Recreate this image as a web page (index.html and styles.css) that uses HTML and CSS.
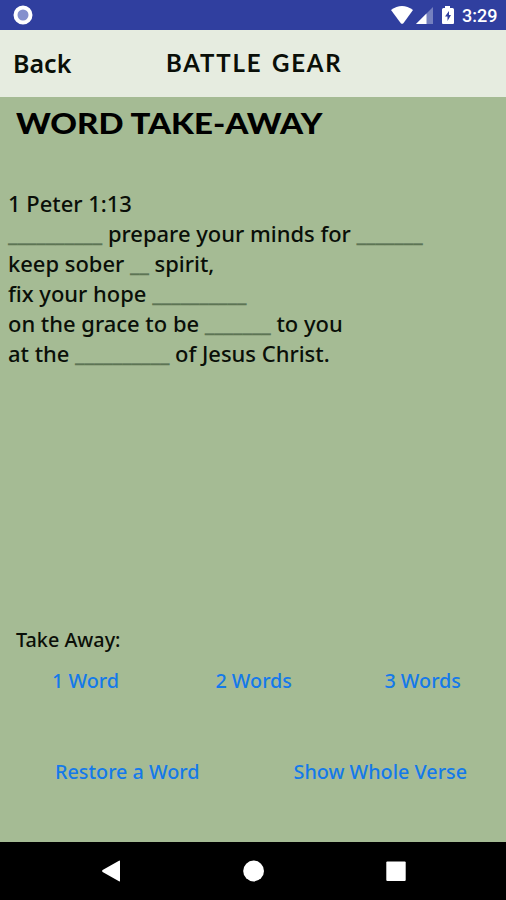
FILE: index.html
```html
<!DOCTYPE html>
<html lang="en">
<head>
    <meta charset="UTF-8">
    <meta name="viewport" content="width=device-width, initial-scale=1.0">
    <title>Battle Gear - Word Take-Away</title>
    <link rel="stylesheet" href="styles.css">
</head>
<body>
    <!-- status bar -->
    <div class="status-bar">
        <svg class="status-sync" width="20" height="20" viewBox="0 0 20 20">
            <circle cx="10" cy="10" r="7.5" fill="#8490cd" stroke="#fff" stroke-width="4"/>
        </svg>
        <svg class="status-icons" width="66" height="22" viewBox="0 0 66 22">
            <path d="M0 6 Q11 -2 22 6 L12.4 19.3 Q11 20.4 9.8 19.3 Z" fill="#fff"/>
            <path d="M42 3 V20 H25 Z" fill="#7580bf"/>
            <path d="M35.5 9.5 V20 H25 Z" fill="#fff"/>
            <path d="M54 2 H59 V4 H61.5 Q63 4 63 5.5 V19 Q63 20 62 20 H52 Q51 20 51 19 V5.5 Q51 4 52.5 4 H54 Z" fill="#fff"/>
            <path d="M58 7 L54 12.5 H56.5 V17 L60 11 H58 Z" fill="#303f9f"/>
        </svg>
        <span class="status-time">3:29</span>
    </div>

    <!-- header -->
    <header class="header">
        <a class="back">Back</a>
        <h1 class="header-title">BATTLE GEAR</h1>
    </header>

    <main class="content">
        <h2 class="page-title">WORD TAKE-AWAY</h2>

        <div class="verse">
            <p>1 Peter 1:13</p>
            <p><span class="blank">__________</span> prepare your minds for <span class="blank">_______</span></p>
            <p>keep sober <span class="blank">__</span> spirit,</p>
            <p>fix your hope <span class="blank">__________</span></p>
            <p>on the grace to be <span class="blank">_______</span> to you</p>
            <p>at the <span class="blank">__________</span> of Jesus Christ.</p>
        </div>

        <div class="actions">
            <p class="actions-label">Take Away:</p>
            <div class="row row-words">
                <a>1 Word</a>
                <a>2 Words</a>
                <a>3 Words</a>
            </div>
            <div class="row row-verse">
                <a>Restore a Word</a>
                <a>Show Whole Verse</a>
            </div>
        </div>
    </main>

    <!-- android navigation -->
    <nav class="nav-bar">
        <svg width="22" height="22" viewBox="0 0 22 22"><path d="M19 1.2 V20.8 Q19 21.8 18 21.2 L1.6 12 Q0.4 11 1.6 10 L18 0.8 Q19 0.2 19 1.2 Z" fill="#fff"/></svg>
        <svg width="22" height="22" viewBox="0 0 22 22"><circle cx="10.6" cy="11" r="10.4" fill="#fff"/></svg>
        <svg width="22" height="22" viewBox="0 0 22 22"><rect x="1.3" y="1.5" width="19.4" height="19.4" rx="1" fill="#fff"/></svg>
    </nav>
</body>
</html>
```
FILE: styles.css
```css
* {
    box-sizing: border-box;
}

body {
    margin: 0;
    height: 900px;
    display: flex;
    flex-direction: column;
    overflow: hidden;
    background: #a5bb94;
    color: #0a0f08;
    font-family: 'Noto Sans', 'Open Sans', sans-serif;
}

h1, h2, p {
    margin: 0;
}

/* status bar */
.status-bar {
    flex: none;
    height: 30px;
    display: flex;
    align-items: center;
    padding: 0 9px 0 13px;
    background: #303f9f;
    color: #fff;
}

.status-icons {
    margin-left: auto;
    margin-right: 5px;
}

.status-time {
    width: 35px;
    font: 500 18px/30px Roboto, sans-serif;
    white-space: nowrap;
    padding-top: 2px;
}

/* header */
.header {
    flex: none;
    height: 67px;
    display: flex;
    align-items: center;
    padding: 0 0 2px 13px;
    background: #e6ece0;
}

.back {
    width: 153px;
    font-size: 25px;
    font-weight: 600;
}

.header-title {
    font-family: Lato, sans-serif;
    font-size: 24px;
    font-weight: 700;
    letter-spacing: 1.8px;
    word-spacing: 2px;
    white-space: nowrap;
}

/* page */
.content {
    flex: 1;
    display: flex;
    flex-direction: column;
}

.page-title {
    align-self: flex-start;
    margin-left: 16px;
    padding-top: 6px;
    font-family: Lato, sans-serif;
    font-size: 29px;
    line-height: 40px;
    font-weight: 900;
    color: #000;
    white-space: nowrap;
    transform: scaleX(1.137);
    transform-origin: left;
}

.verse {
    padding: 46px 8px 0;
    font-size: 21.95px;
    line-height: 30px;
    font-weight: 480;
    white-space: nowrap;
}

.blank {
    color: #5d7553;
    letter-spacing: -0.1px;
    text-shadow: 0 -1px #71886a;
}

.actions {
    margin-top: auto;
    height: 217px;
    font-size: 19.8px;
    line-height: 30px;
    font-weight: 480;
}

.actions-label {
    padding-left: 16px;
}

.row {
    display: flex;
    justify-content: space-between;
    color: #1479ea;
    white-space: nowrap;
}

.row-words {
    padding: 11px 45px 0 52px;
}

.row-words a:nth-child(2) {
    margin-left: 4px;
}

.row-verse {
    padding: 61px 39px 0 55px;
}

/* navigation */
.nav-bar {
    flex: none;
    height: 58px;
    display: flex;
    align-items: center;
    justify-content: space-between;
    padding: 0 99px 0 101px;
    background: #000;
}
```
